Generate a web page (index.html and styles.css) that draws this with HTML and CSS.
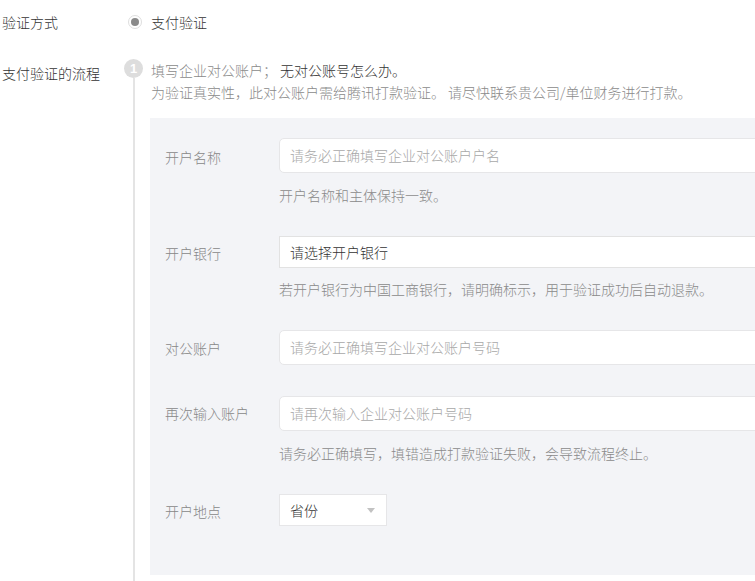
FILE: index.html
```html
<!DOCTYPE html>
<html lang="zh-CN">
<head>
<meta charset="utf-8">
<link rel="stylesheet" href="styles.css">
</head>
<body>
<div class="page">
  <div class="row row-method">
    <div class="row-label">验证方式</div>
    <div class="row-body">
      <label class="radio"><span class="radio-dot"></span><span>支付验证</span></label>
    </div>
  </div>
  <div class="row row-flow">
    <div class="row-label flow-label">支付验证的流程</div>
    <div class="steps">
      <div class="step-marker">
        <span class="step-num">1</span>
        <span class="step-line"></span>
      </div>
      <div class="step-content">
        <p class="step-desc"><span class="muted">填写企业对公账户；</span> <a class="link">无对公账号怎么办。</a></p>
        <p class="step-desc muted">为验证真实性，此对公账户需给腾讯打款验证。 请尽快联系贵公司/单位财务进行打款。</p>
        <div class="panel">
          <div class="field f1">
            <div class="field-label">开户名称</div>
            <div class="field-main">
              <div class="input placeholder">请务必正确填写企业对公账户户名</div>
              <div class="hint">开户名称和主体保持一致。</div>
            </div>
          </div>
          <div class="field f2">
            <div class="field-label">开户银行</div>
            <div class="field-main">
              <div class="input select-box">请选择开户银行</div>
              <div class="hint">若开户银行为中国工商银行，请明确标示，用于验证成功后自动退款。</div>
            </div>
          </div>
          <div class="field f3">
            <div class="field-label">对公账户</div>
            <div class="field-main">
              <div class="input placeholder">请务必正确填写企业对公账户号码</div>
            </div>
          </div>
          <div class="field f4">
            <div class="field-label">再次输入账户</div>
            <div class="field-main">
              <div class="input placeholder">请再次输入企业对公账户号码</div>
              <div class="hint">请务必正确填写，填错造成打款验证失败，会导致流程终止。</div>
            </div>
          </div>
          <div class="field f5">
            <div class="field-label">开户地点</div>
            <div class="field-main">
              <div class="dropdown"><span>省份</span><span class="caret"></span></div>
            </div>
          </div>
        </div>
      </div>
    </div>
  </div>
</div>
</body>
</html>
```
FILE: styles.css
```css
html, body {
  margin: 0;
  padding: 0;
  background: #fff;
  overflow: hidden;
}
body {
  font-family: "Noto Sans CJK SC", "Noto Sans", sans-serif;
  font-size: 14px;
  font-weight: 300;
  color: #333;
  width: 755px;
  height: 581px;
}
.page {
  padding-top: 11px;
}
.row {
  display: flex;
}
.row-label {
  width: 124px;
  padding-left: 2px;
  box-sizing: border-box;
  flex: none;
  line-height: 22px;
  color: #333;
}
.row-method {
  height: 22px;
  margin-bottom: 26px;
}
.row-body {
  padding-left: 4px;
}
.radio {
  display: flex;
  align-items: center;
  gap: 9px;
  line-height: 22px;
}
.radio-dot {
  width: 14px;
  height: 14px;
  border: 1px solid #dedede;
  border-radius: 50%;
  box-sizing: border-box;
  display: flex;
  align-items: center;
  justify-content: center;
}
.radio-dot::after {
  content: "";
  width: 8px;
  height: 8px;
  border-radius: 50%;
  background: #8a8a8a;
}
.flow-label {
  padding-top: 3px;
}
.steps {
  display: flex;
  flex: 1;
}
.step-marker {
  width: 26px;
  flex: none;
  display: flex;
  flex-direction: column;
  align-items: flex-start;
}
.step-num {
  width: 19px;
  height: 19px;
  border-radius: 50%;
  background: #ddd;
  color: #fff;
  font-size: 13px;
  font-weight: bold;
  line-height: 19px;
  text-align: center;
  font-family: "Liberation Sans", sans-serif;
}
.step-line {
  width: 2px;
  margin-left: 9px;
  height: 520px;
  background: #e4e4e4;
}
.step-content {
  flex: 1;
}
.step-desc {
  margin: 0;
  line-height: 22px;
  padding-left: 1px;
  white-space: nowrap;
}
.muted {
  color: #8a8a8a;
}
.link {
  color: #333;
}
.panel {
  margin-top: 15px;
  width: 640px;
  background: #f3f4f7;
  padding: 20px 0 49px 15px;
  box-sizing: border-box;
}
.field {
  display: flex;
}
.field-label {
  width: 114px;
  flex: none;
  color: #888;
  line-height: 20px;
}
.field-main {
  flex: 1;
}
.input {
  height: 35px;
  box-sizing: border-box;
  background: #fff;
  border: 1px solid #e6e6e8;
  border-radius: 5px;
  padding-left: 10px;
  line-height: 33px;
  white-space: nowrap;
}
.placeholder {
  color: #a8a8a8;
}
.select-box {
  height: 32px;
  line-height: 30px;
  border-radius: 0;
  border-color: #e2e2e2;
  color: #333;
}
.hint {
  color: #8a8a8a;
  line-height: 16px;
  margin-top: 14px;
  white-space: nowrap;
}
.f1 { margin-bottom: 33px; }
.f1 .field-label { padding-top: 9px; }
.f2 { margin-bottom: 33px; }
.f2 .hint { margin-top: 13px; }
.f2 .field-label { padding-top: 7px; }
.f3 { margin-bottom: 31px; }
.f3 .field-label { padding-top: 8px; }
.f4 { margin-bottom: 33px; }
.f4 .field-label { padding-top: 7px; }
.f5 .field-label { padding-top: 7px; }
.dropdown {
  width: 108px;
  height: 32px;
  box-sizing: border-box;
  background: #fff;
  border: 1px solid #e6e6e8;
  display: flex;
  align-items: center;
  justify-content: space-between;
  padding: 0 10px 0 10px;
  color: #333;
}
.caret {
  width: 0;
  height: 0;
  border-left: 4.5px solid transparent;
  border-right: 4.5px solid transparent;
  border-top: 5px solid #c2c2c2;
  margin-right: 1px;
}
```
